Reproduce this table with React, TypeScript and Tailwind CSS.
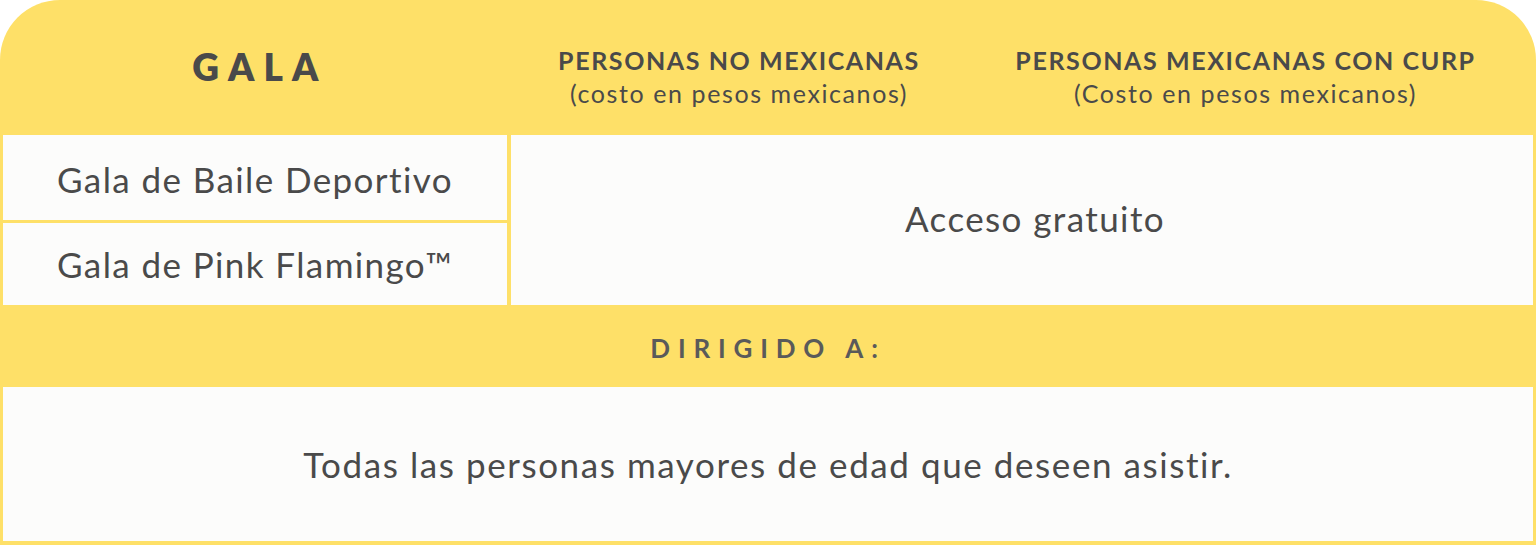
const font = 'font-["Lato","Liberation_Sans",sans-serif]';

const ROWS = ['Gala de Baile Deportivo', 'Gala de Pink Flamingo™'];

export default function App() {
  return (
    <div className={`w-[1536px] h-[545px] bg-[#fee068] rounded-t-[60px] flex flex-col px-[3px] pb-[4px] text-[#4a4a4a] ${font}`}>
      {/* encabezado */}
      <div className="h-[135px] grid grid-cols-[507px_458px_1fr] items-center">
        <div className="text-center text-[37px] font-extrabold tracking-[0.25em] pl-[7px] pb-[2px]">GALA</div>
        <div className="text-center leading-[33px] pt-[18px] tracking-[0.1em]">
          <div className="text-[25px] font-bold">PERSONAS NO MEXICANAS</div>
          <div className="text-[25px]">(costo en pesos mexicanos)</div>
        </div>
        <div className="text-center leading-[33px] pt-[18px] pr-[10px] tracking-[0.1em]">
          <div className="text-[25px] font-bold">PERSONAS MEXICANAS CON CURP</div>
          <div className="text-[25px]">(Costo en pesos mexicanos)</div>
        </div>
      </div>

      {/* filas */}
      <div className="h-[170px] flex gap-[4px] text-[35px] tracking-[0.04em]">
        <div className="w-[504px] flex flex-col gap-[3px]">
          {ROWS.map((r, i) => (
            <div key={r} className={`flex-1 bg-[#fcfcfb] flex items-center pl-[54px] ${i === 0 ? 'pt-[3px]' : 'pt-0'}`}>
              {r}
            </div>
          ))}
        </div>
        <div className="flex-1 bg-[#fcfcfb] flex items-center justify-center pl-[26px] pb-[4px]">
          Acceso gratuito
        </div>
      </div>

      {/* dirigido a */}
      <div className="h-[82px] flex items-center justify-center text-[26px] font-bold tracking-[0.3em] text-[#5a5a5a] pt-[4px]">
        DIRIGIDO A:
      </div>

      <div className="flex-1 bg-[#fcfcfb] flex items-center justify-center text-[35px] tracking-[0.045em]">
        Todas las personas mayores de edad que deseen asistir.
      </div>
    </div>
  );
}
